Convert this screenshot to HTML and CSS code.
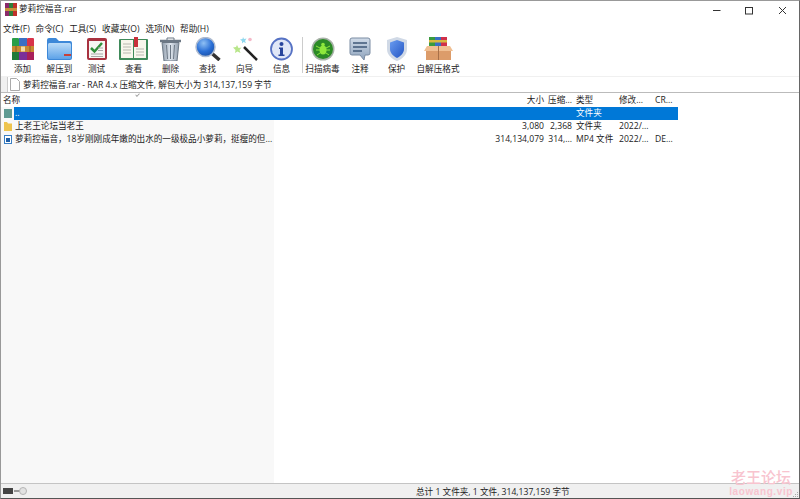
FILE: index.html
```html
<!DOCTYPE html>
<html lang="zh">
<head>
<meta charset="utf-8">
<title>萝莉控福音.rar</title>
<link rel="stylesheet" href="styles.css">
</head>
<body>
<svg class="defs" width="0" height="0">
  <defs>
    <linearGradient id="gFolder" x1="0" y1="0" x2="0" y2="1"><stop offset="0" stop-color="#bcdcf8"/><stop offset="1" stop-color="#5da2e8"/></linearGradient>
    <linearGradient id="gBin" x1="0" y1="0" x2="1" y2="0"><stop offset="0" stop-color="#8f9cab"/><stop offset=".5" stop-color="#dfe6ee"/><stop offset="1" stop-color="#8f9cab"/></linearGradient>
    <radialGradient id="gLens" cx=".4" cy=".3" r=".8"><stop offset="0" stop-color="#8fc0f4"/><stop offset=".55" stop-color="#2a6fd6"/><stop offset="1" stop-color="#174a9e"/></radialGradient>
    <linearGradient id="gNote" x1="0" y1="0" x2="0" y2="1"><stop offset="0" stop-color="#d0dbe8"/><stop offset="1" stop-color="#8ea3bd"/></linearGradient>
    <linearGradient id="gShield" x1="0" y1="0" x2="1" y2="1"><stop offset="0" stop-color="#6a9cf0"/><stop offset="1" stop-color="#2355c4"/></linearGradient>
  </defs>
</svg>
<div class="window">
  <div class="titlebar">
    <svg class="appicon" width="12" height="13" viewBox="0 0 12 13"><rect x="0" y="0" width="4" height="13" fill="#8a2a6a"/><rect x="4" y="0" width="4" height="13" fill="#2f7f3a"/><rect x="8" y="0" width="4" height="13" fill="#c0302a"/><rect x="0" y="5" width="12" height="3" fill="#c8913a"/></svg>
    <span class="title">萝莉控福音.rar</span>
    <div class="winbtns">
      <svg width="33" height="16" viewBox="0 0 33 16"><path d="M13 9.500h7.500" stroke="#333" fill="none"/></svg>
      <svg width="33" height="16" viewBox="0 0 33 16"><rect x="12.500" y="6.500" width="7" height="6.500" stroke="#333" fill="none"/></svg>
      <svg width="33" height="16" viewBox="0 0 33 16"><path d="M13 6l7 7M20 6l-7 7" stroke="#333" fill="none"/></svg>
    </div>
  </div>
  <div class="menubar"><span>文件(F)</span><span>命令(C)</span><span>工具(S)</span><span>收藏夹(O)</span><span>选项(N)</span><span>帮助(H)</span></div>
  <div class="toolbar">
    <div class="tool t37"><svg width="24" height="24" viewBox="0 0 24 24"><rect x="1" y="1" width="7" height="22" rx="1" fill="#2a9e48"/><rect x="1" y="15" width="7" height="8" fill="#1f7a38"/><rect x="8" y="1" width="8" height="22" fill="#3b6fc4"/><rect x="8" y="15" width="8" height="8" fill="#7a2f9a"/><rect x="16" y="1" width="7" height="22" rx="1" fill="#d8344a"/><rect x="16" y="15" width="7" height="8" fill="#a81f5a"/><rect x="1" y="9" width="22" height="6" fill="#c98a32"/><rect x="10" y="9.500" width="4" height="5" fill="#f3dca6"/><path d="M5 9v6M19 9v6" stroke="#8a5a1e"/></svg><span>添加</span></div>
    <div class="tool t37"><svg width="27" height="24" viewBox="0 0 27 24"><path d="M1 3a2 2 0 0 1 2-2h7l3 3h11a2 2 0 0 1 2 2v15a2 2 0 0 1-2 2H3a2 2 0 0 1-2-2z" fill="#3d88d8"/><rect x="2" y="6" width="23" height="16" rx="1.500" fill="url(#gFolder)"/><rect x="18" y="17" width="7" height="2" fill="#c8403a"/></svg><span>解压到</span></div>
    <div class="tool t37"><svg width="22" height="24" viewBox="0 0 22 24"><rect x="1" y="1" width="20" height="22" rx="2" fill="#a83240"/><rect x="3" y="4" width="16" height="17" fill="#f6f6f2"/><path d="M5 11l3.500 3.500L16 6" stroke="#2f8f3a" stroke-width="2.500" fill="none"/><path d="M5 17h12M5 19.500h12M12 11h5M12 13.500h5" stroke="#a8a8a8"/></svg><span>测试</span></div>
    <div class="tool t37"><svg width="29" height="24" viewBox="0 0 29 24"><rect x="0" y="2" width="29" height="21" rx="1" fill="#3f8a5a"/><path d="M2 3h12v18H2zM15 3h12v18H15z" fill="#f8f6ec"/><path d="M4 7h8M4 10h8M4 13h8M4 16h8M17 12h8M17 15h8M17 18h8" stroke="#b8b8b0"/><rect x="15" y="0" width="4" height="10" fill="#c8303a"/></svg><span>查看</span></div>
    <div class="tool t37"><svg width="23" height="24" viewBox="0 0 23 24"><path d="M1 4h21" stroke="#6c7885" stroke-width="2.500"/><path d="M8 3V1h7v2" stroke="#6c7885" fill="none"/><path d="M3 5.500h17L18 24H5z" fill="url(#gBin)" stroke="#6c7885"/><path d="M7.500 8l1 14M11.500 8v14M15.500 8l-1 14" stroke="#6c7885"/></svg><span>删除</span></div>
    <div class="tool t37"><svg width="26" height="24" viewBox="0 0 26 24"><path d="M16.500 16l8 7" stroke="#333" stroke-width="3.500"/><circle cx="10.500" cy="10" r="9.500" fill="url(#gLens)" stroke="#aebbd0" stroke-width="1.500"/></svg><span>查找</span></div>
    <div class="tool t37"><svg width="26" height="24" viewBox="0 0 26 24"><path d="M12 10l13 13" stroke="#222" stroke-width="2.500"/><path d="M5 8l1.500 3 3-.5-2 2.500 1 3-3-1.500L3 16l.500-3L1 10.500l3-.5z" fill="#b8e68a"/><path d="M11 0l1 2 2.500-.5L13 4l1 2-2.500-1L10 6.500V4L8 2.500 10.500 2z" fill="#8fd8ee"/><circle cx="18" cy="2.500" r="1.800" fill="#f4b8c8"/></svg><span>向导</span></div>
    <div class="tool t37"><svg width="23" height="23" viewBox="0 0 23 23"><circle cx="11.500" cy="11.500" r="10.500" fill="#e0e7f7" stroke="#5672c4" stroke-width="1.800"/><circle cx="11.500" cy="6.500" r="2" fill="#27459c"/><path d="M9 10h4v7h1.500v1.500h-6V17H10v-5.500H9z" fill="#27459c"/></svg><span>信息</span></div>
    <div class="sep"></div>
    <div class="tool t45"><svg width="24" height="24" viewBox="0 0 24 24"><circle cx="12" cy="12" r="11.500" fill="#a8b2a8"/><circle cx="12" cy="12" r="10" fill="#2b8a26"/><ellipse cx="12" cy="13" rx="3.500" ry="4.500" fill="#8ee83c"/><circle cx="12" cy="7.500" r="1.800" fill="#8ee83c"/><path d="M5 9l4 2M19 9l-4 2M5 13h4M19 13h-4M6 18l3-2M18 18l-3-2" stroke="#8ee83c"/></svg><span>扫描病毒</span></div>
    <div class="tool t36"><svg width="22" height="24" viewBox="0 0 22 24"><path d="M3 1h16a2 2 0 0 1 2 2v13a2 2 0 0 1-2 2h-3l-1 5-4-5H3a2 2 0 0 1-2-2V3a2 2 0 0 1 2-2z" fill="url(#gNote)" stroke="#7a8ca3"/><path d="M4 6h14M4 10h14M4 14h9" stroke="#3f5878" stroke-width="1.400"/></svg><span>注释</span></div>
    <div class="tool t37"><svg width="22" height="24" viewBox="0 0 22 24"><path d="M11 0l10 3v9c0 6-5 10-10 12C6 22 1 18 1 12V3z" fill="#d0d9e6"/><path d="M11 3l7 2.500V12c0 4-3 7-7 9-4-2-7-5-7-9V5.500z" fill="url(#gShield)"/></svg><span>保护</span></div>
    <div class="tool t50"><svg width="29" height="24" viewBox="0 0 29 24"><rect x="5" y="0" width="6" height="9" fill="#3a9a3e"/><rect x="11" y="0" width="6" height="9" fill="#3a6fc4"/><rect x="17" y="0" width="6" height="9" fill="#d0304a"/><rect x="5" y="3" width="18" height="2.500" fill="#d8b840"/><path d="M3 9h23l3 5H0z" fill="#f0bf92"/><rect x="2" y="14" width="25" height="9" fill="#dc9c6a"/><path d="M14.500 9v14" stroke="#a87048"/></svg><span>自解压格式</span></div>
  </div>
  <div class="addressbar">
    <div class="address">
      <svg width="10" height="13" viewBox="0 0 10 13"><path d="M.5.500h6l3 3v9H.5z" fill="#fff" stroke="#aaa"/></svg>
      <span>萝莉控福音.rar - RAR 4.x 压缩文件, 解包大小为 314,137,159 字节</span>
    </div>
  </div>
  <div class="list">
    <div class="row header">
      <span class="c-name">名称<i class="sort"></i></span><span class="c-size">大小</span><span class="c-pack">压缩...</span><span class="c-type">类型</span><span class="c-date">修改...</span><span class="c-crc">CR...</span>
    </div>
    <div class="row selected">
      <span class="c-name"><svg class="ficon" width="10" height="11" viewBox="0 0 10 11"><path d="M1 1h8v9H1z" fill="#5f9a92"/></svg><b class="selname">..</b></span><span class="c-size"></span><span class="c-pack"></span><span class="c-type">文件夹</span><span class="c-date"></span><span class="c-crc"></span>
    </div>
    <div class="row">
      <span class="c-name"><svg class="ficon" width="10" height="11" viewBox="0 0 10 11"><path d="M1 1h3l1 1.500h4V10H1z" fill="#eec44e"/></svg><b class="fname">上老王论坛当老王</b></span><span class="c-size">3,080</span><span class="c-pack">2,368</span><span class="c-type">文件夹</span><span class="c-date">2022/...</span><span class="c-crc"></span>
    </div>
    <div class="row">
      <span class="c-name"><svg class="ficon" width="10" height="11" viewBox="0 0 10 11"><rect x="1.500" y="1.500" width="7" height="8" fill="#fff" stroke="#3a7fc4"/><rect x="3" y="4" width="4" height="4" fill="#1f5fa8"/></svg><b class="fname">萝莉控福音，18岁刚刚成年嫩的出水的一级极品小萝莉，挺瘦的但...</b></span><span class="c-size">314,134,079</span><span class="c-pack">314,...</span><span class="c-type">MP4 文件</span><span class="c-date">2022/...</span><span class="c-crc">DE...</span>
    </div>
  </div>
  <div class="statusbar">
    <div class="st-icons"><svg width="26" height="9" viewBox="0 0 26 9"><rect x="1" y="1" width="10" height="6" fill="#444"/><path d="M12 4h6" stroke="#999" stroke-width="2"/><circle cx="21" cy="4" r="3.500" fill="#e2e2e2" stroke="#b4b4b4"/></svg></div>
    <div class="st-text">总计 1 文件夹, 1 文件, 314,137,159 字节</div>
    <div class="watermark"><span class="wm1">老王论坛</span><span class="wm2">laowang.vip</span></div>
    <svg class="grip" width="7" height="7" viewBox="0 0 7 7"><path d="M5 1h1v1H5zM3 3h1v1H3zM5 3h1v1H5zM1 5h1v1H1zM3 5h1v1H3zM5 5h1v1H5z" fill="#aaa"/></svg>
  </div>
</div>
</body>
</html>
```
FILE: styles.css
```css
* { box-sizing: border-box; }
html, body { margin: 0; padding: 0; height: 100%; overflow: hidden; }
body { font-family: "Open Sans", "Noto Sans CJK SC", "Liberation Sans", sans-serif; font-size: 8.6px; color: #222; background: #fff; }
.defs { position: absolute; }
.window { height: 499px; width: 800px; display: flex; flex-direction: column; background: #fff; border-right: 1px solid #666; border-left: 1px solid #999; border-bottom: 1px solid #555; border-top: 1px solid #999; }
.titlebar { height: 20px; display: flex; align-items: flex-start; padding: 2px 0 0 4px; background: #fff; flex: none; }
.appicon { margin-right: 2px; flex: none; }
.title { line-height: 12px; }
.winbtns { margin-left: auto; margin-top: -2px; display: flex; }
.winbtns svg { display: block; }
.menubar { height: 14px; display: flex; align-items: center; gap: 5.900px; padding-left: 2px; flex: none; background: #fff; }
.toolbar { height: 41px; display: flex; padding-left: 3px; flex: none; background: #fff; }
.tool { display: flex; flex-direction: column; align-items: center; height: 41px; }
.tool svg { display: block; margin-top: 2px; height: 24px; flex: none; }
.tool span { line-height: 12px; margin-top: 2px; white-space: nowrap; }
.t37 { width: 37px; }
.t36 { width: 36px; }
.t45 { width: 39px; }
.t50 { width: 46px; }
.sep { width: 1px; height: 36px; margin: 2px 0 0 2px; background: #ccc; }
.addressbar { height: 17px; flex: none; padding: 1px 0 0 6px; background: #f0f0f0; border-bottom: 1px solid #bbb; }
.address { height: 15px; background: #fff; display: flex; align-items: center; gap: 3px; padding-left: 2px; border-left: 1px solid #ccc; }
.list { flex: 1; background: linear-gradient(to right, #f8f8f8 273px, #fff 273px); }
.row { display: flex; height: 13px; line-height: 13px; align-items: stretch; width: 677px; white-space: nowrap; }
.header { height: 14px; line-height: 14px; background: #fff; width: 100%; }
.c-name { width: 273px; padding-left: 2px; display: flex; align-items: center; position: relative; }
.c-size { width: 270px; text-align: right; }
.c-pack { width: 30px; padding-right: 2px; text-align: right; }
.c-type { width: 43px; padding-left: 2px; }
.c-date { width: 36px; padding-left: 2px; }
.c-crc { width: 25px; padding-left: 2px; }
.ficon { flex: none; }
b { font-weight: 400; }
.selname, .fname { margin-left: 2px; }
.selected { color: #fff; }
.selected .c-name { background: linear-gradient(to right, #f8f8f8 13px, #0078d7 13px); }
.selected .c-size, .selected .c-pack, .selected .c-type, .selected .c-date, .selected .c-crc { background: #0078d7; }
.sort { position: absolute; left: 134px; top: 0; width: 5px; height: 3px; border-left: 1px solid #999; border-bottom: 1px solid #999; transform: rotate(-45deg) scale(.8); }
.statusbar { height: 15px; flex: none; display: flex; align-items: center; background: #f0f0f0; border-top: 1px solid #c4c4c4; position: relative; }
.st-icons { width: 29px; padding-left: 1px; display: flex; }
.st-text { margin-left: 386px; }
.watermark { position: absolute; right: 6px; bottom: 1px; display: flex; flex-direction: column; align-items: center; color: #f8c4cf; }
.wm1 { font-size: 15px; line-height: 18px; font-weight: 500; }
.wm2 { font-family: "Liberation Sans", sans-serif; font-size: 10px; line-height: 11px; font-weight: 700; letter-spacing: .6px; }
.grip { position: absolute; right: 0; bottom: 0; }
```
